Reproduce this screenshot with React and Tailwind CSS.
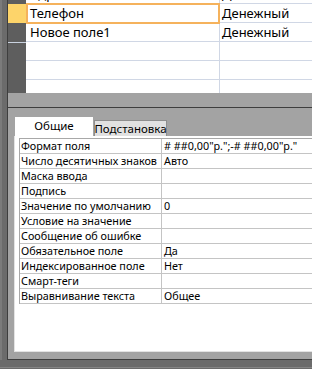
export default function App() {
  const props = [
    ["Формат поля", '# ##0,00"р.";-# ##0,00"р."'],
    ["Число десятичных знаков", "Авто"],
    ["Маска ввода", ""],
    ["Подпись", ""],
    ["Значение по умолчанию", "0"],
    ["Условие на значение", ""],
    ["Сообщение об ошибке", ""],
    ["Обязательное поле", "Да"],
    ["Индексированное поле", "Нет"],
    ["Смарт-теги", ""],
    ["Выравнивание текста", "Общее"],
  ];
  const gridRows = [
    { a: "Адрес", b: "Денежный" },
    { a: "Телефон", b: "Денежный", sel: true },
    { a: "Новое поле1", b: "Денежный" },
    { a: "", b: "" },
    { a: "", b: "" },
    { a: "", b: "" },
  ];
  return (
    <div className="w-[312px] h-[369px] overflow-hidden bg-[#6b6b6b] flex flex-col font-['Noto_Sans',sans-serif] text-black">
      <div className="flex h-[360px] shrink-0">
        <div className="w-[8px] shrink-0 border-l-2 border-l-[#7b7b7b] border-r border-r-[#3e3e3e] bg-[#6b6b6b]" />
        <div className="flex-1 flex flex-col min-w-0">
          {/* datasheet grid */}
          <div className="h-[93px] shrink-0 relative overflow-hidden bg-white">
            <div className="flex flex-col mt-[-15px]">
              {gridRows.map((r, i) => (
                <div key={i} className="flex h-[19px] shrink-0">
                  <div
                    className={
                      "w-[18px] shrink-0 " +
                      (r.sel ? "bg-[#fdd46a]" : i === 3 ? "bg-[#5e5e5e] border-t border-t-[#c9d2df]" : "bg-[#5e5e5e]")
                    }
                  />
                  <div className="w-[194px] shrink-0 border-r border-b border-[#d0d7e5] pl-[4px] text-[13px] leading-[18px] whitespace-nowrap overflow-hidden">
                    {r.a}
                  </div>
                  <div className="flex-1 border-b border-[#d0d7e5] pl-[2px] text-[13px] leading-[18px] whitespace-nowrap overflow-hidden">
                    {r.b}
                  </div>
                </div>
              ))}
            </div>
            <div className="absolute left-[18px] top-[3px] w-[194px] h-[21px] border-2 border-[#f5b25c]" />
          </div>
          <div className="h-[14px] shrink-0 bg-[#a3a3a3]" />
          <div className="h-px shrink-0 bg-[#3e3e3e]" />
          {/* property pane */}
          <div className="flex-1 min-h-0 bg-[#a3a3a3] border-b border-b-[#3e3e3e] pt-[9px] pb-[7px] flex flex-col">
            <div className="flex h-[19px] shrink-0 pl-[7px] items-end">
              <div className="w-[78px] h-[19px] bg-white flex items-center justify-center text-[11.5px] leading-none pb-[1px]">
                Общие
              </div>
              <div className="ml-[1px] w-[73px] h-[16px] bg-[#e1e1e1] border border-b-0 border-[#8e8e8e] flex items-center justify-center text-[11.5px] leading-none whitespace-nowrap">
                Подстановка
              </div>
            </div>
            <div className="flex-1 ml-[6px] bg-white border-l border-b border-[#e3e3e3] pt-[2px] pl-[4px] overflow-hidden">
              <div className="w-[320px] border-t border-l border-[#a8a8a8]">
                {props.map(([k, v], i) => (
                  <div key={i} className="flex h-[15px] border-b border-[#c4c4c4] text-[10.8px] leading-[14px] whitespace-nowrap">
                    <div className="w-[142px] shrink-0 border-r border-[#c4c4c4] pl-[1px] overflow-hidden">{k}</div>
                    <div className="flex-1 pl-[2px] overflow-hidden">{v}</div>
                  </div>
                ))}
              </div>
            </div>
          </div>
        </div>
      </div>
      <div className="h-[9px] shrink-0 flex flex-col">
        <div className="h-[7px] bg-[#6b6b6b]" />
        <div className="h-px bg-[#858585]" />
        <div className="h-px bg-[#6b6b6b]" />
      </div>
    </div>
  );
}
